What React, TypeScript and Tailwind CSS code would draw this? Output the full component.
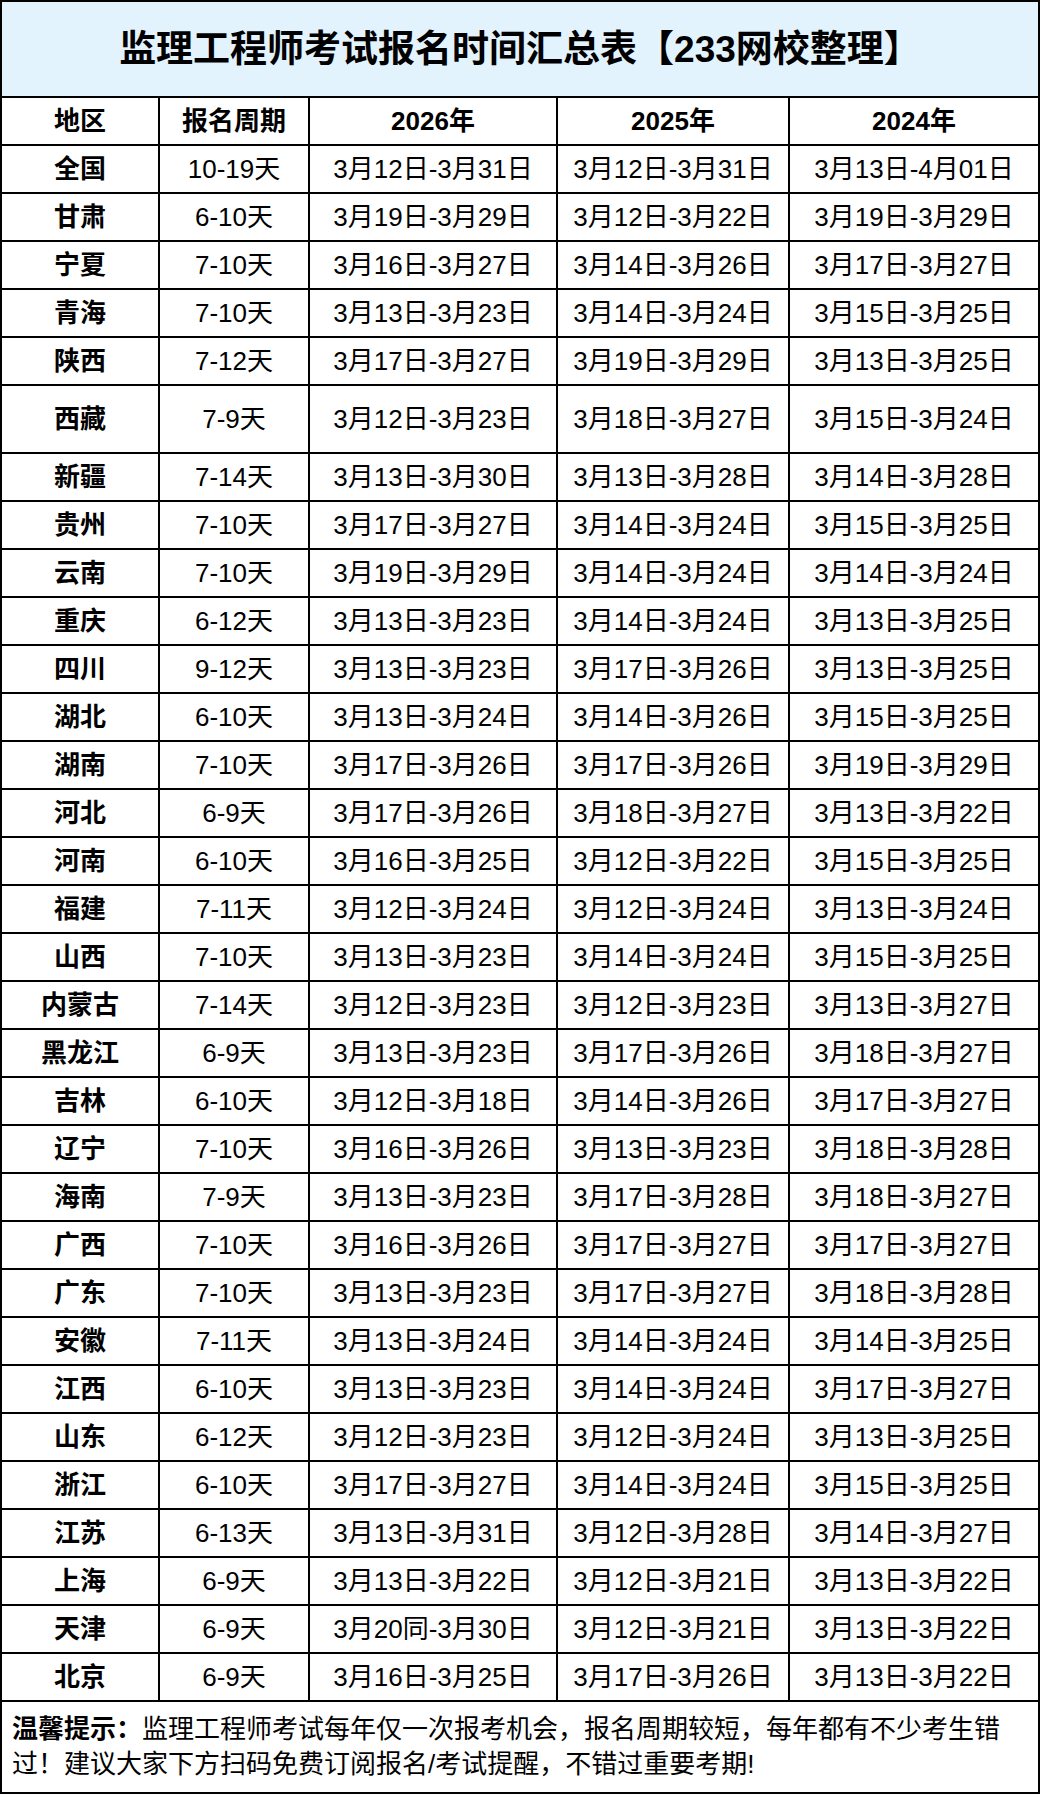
const rows: [string, string, string, string, string][] = [
  ["全国", "10-19天", "3月12日-3月31日", "3月12日-3月31日", "3月13日-4月01日"],
  ["甘肃", "6-10天", "3月19日-3月29日", "3月12日-3月22日", "3月19日-3月29日"],
  ["宁夏", "7-10天", "3月16日-3月27日", "3月14日-3月26日", "3月17日-3月27日"],
  ["青海", "7-10天", "3月13日-3月23日", "3月14日-3月24日", "3月15日-3月25日"],
  ["陕西", "7-12天", "3月17日-3月27日", "3月19日-3月29日", "3月13日-3月25日"],
  ["西藏", "7-9天", "3月12日-3月23日", "3月18日-3月27日", "3月15日-3月24日"],
  ["新疆", "7-14天", "3月13日-3月30日", "3月13日-3月28日", "3月14日-3月28日"],
  ["贵州", "7-10天", "3月17日-3月27日", "3月14日-3月24日", "3月15日-3月25日"],
  ["云南", "7-10天", "3月19日-3月29日", "3月14日-3月24日", "3月14日-3月24日"],
  ["重庆", "6-12天", "3月13日-3月23日", "3月14日-3月24日", "3月13日-3月25日"],
  ["四川", "9-12天", "3月13日-3月23日", "3月17日-3月26日", "3月13日-3月25日"],
  ["湖北", "6-10天", "3月13日-3月24日", "3月14日-3月26日", "3月15日-3月25日"],
  ["湖南", "7-10天", "3月17日-3月26日", "3月17日-3月26日", "3月19日-3月29日"],
  ["河北", "6-9天", "3月17日-3月26日", "3月18日-3月27日", "3月13日-3月22日"],
  ["河南", "6-10天", "3月16日-3月25日", "3月12日-3月22日", "3月15日-3月25日"],
  ["福建", "7-11天", "3月12日-3月24日", "3月12日-3月24日", "3月13日-3月24日"],
  ["山西", "7-10天", "3月13日-3月23日", "3月14日-3月24日", "3月15日-3月25日"],
  ["内蒙古", "7-14天", "3月12日-3月23日", "3月12日-3月23日", "3月13日-3月27日"],
  ["黑龙江", "6-9天", "3月13日-3月23日", "3月17日-3月26日", "3月18日-3月27日"],
  ["吉林", "6-10天", "3月12日-3月18日", "3月14日-3月26日", "3月17日-3月27日"],
  ["辽宁", "7-10天", "3月16日-3月26日", "3月13日-3月23日", "3月18日-3月28日"],
  ["海南", "7-9天", "3月13日-3月23日", "3月17日-3月28日", "3月18日-3月27日"],
  ["广西", "7-10天", "3月16日-3月26日", "3月17日-3月27日", "3月17日-3月27日"],
  ["广东", "7-10天", "3月13日-3月23日", "3月17日-3月27日", "3月18日-3月28日"],
  ["安徽", "7-11天", "3月13日-3月24日", "3月14日-3月24日", "3月14日-3月25日"],
  ["江西", "6-10天", "3月13日-3月23日", "3月14日-3月24日", "3月17日-3月27日"],
  ["山东", "6-12天", "3月12日-3月23日", "3月12日-3月24日", "3月13日-3月25日"],
  ["浙江", "6-10天", "3月17日-3月27日", "3月14日-3月24日", "3月15日-3月25日"],
  ["江苏", "6-13天", "3月13日-3月31日", "3月12日-3月28日", "3月14日-3月27日"],
  ["上海", "6-9天", "3月13日-3月22日", "3月12日-3月21日", "3月13日-3月22日"],
  ["天津", "6-9天", "3月20同-3月30日", "3月12日-3月21日", "3月13日-3月22日"],
  ["北京", "6-9天", "3月16日-3月25日", "3月17日-3月26日", "3月13日-3月22日"],
];

const headers = ["地区", "报名周期", "2026年", "2025年", "2024年"];

export default function App() {
  return (
    <div className="w-[1040px] border-2 border-black bg-white text-black font-['Liberation_Sans','Noto_Sans_CJK_SC',sans-serif]">
      {/* Title */}
      <div className="h-[96px] border-b-2 border-black bg-[#e2f3fd] flex items-center justify-center">
        <h1 className="text-[37px] font-bold leading-none">监理工程师考试报名时间汇总表【233网校整理】</h1>
      </div>

      {/* Table */}
      <div className="grid grid-cols-[158px_150px_248px_232px_248px] text-[26px] leading-none">
        {headers.map((h, i) => (
          <div
            key={h}
            className={`h-[48px] flex items-center justify-center border-b-2 border-black font-bold ${i < 4 ? "border-r-2" : ""}`}
          >
            {h}
          </div>
        ))}
        {rows.map((r) =>
          r.map((c, i) => (
            <div
              key={r[0] + i}
              className={`flex items-center justify-center border-b-2 border-black ${r[0] === "西藏" ? "h-[68px]" : "h-[48px]"} ${i < 4 ? "border-r-2" : ""} ${i === 0 ? "font-bold" : ""}`}
            >
              {c}
            </div>
          ))
        )}
      </div>

      {/* Note */}
      <div className="h-[90px] px-[10px] py-[10px] text-[26px] leading-[35px]">
        <span className="font-bold">温馨提示：</span>
        监理工程师考试每年仅一次报考机会，报名周期较短，每年都有不少考生错过！建议大家下方扫码免费订阅报名/考试提醒，不错过重要考期!
      </div>
    </div>
  );
}
